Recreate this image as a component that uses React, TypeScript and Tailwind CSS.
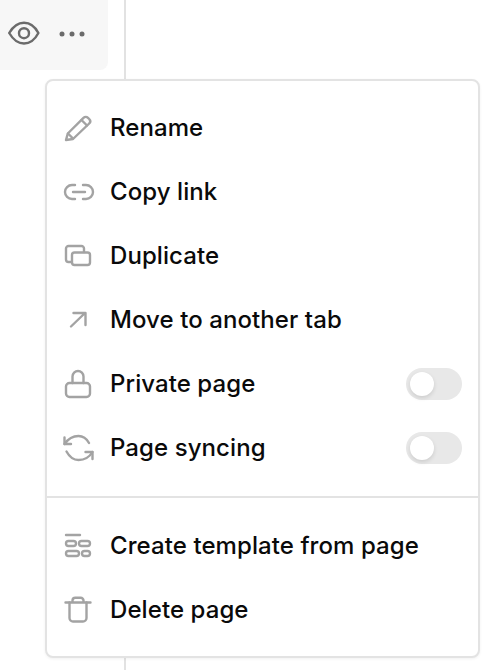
import type { ReactNode } from 'react'

const iconClass = 'block w-[32px] h-[32px] text-[#a3a3a3]'

function Icon({ children }: { children: ReactNode }) {
  return (
    <svg viewBox="0 0 32 32" fill="none" stroke="currentColor" strokeWidth="2.4" strokeLinecap="round" strokeLinejoin="round" className={iconClass}>
      {children}
    </svg>
  )
}

const pencil = (
  <Icon>
    <path d="M3 28l1.800-6.500L20.500 5.800c1.300-1.300 3.200-1.300 4.500 0l1.200 1.200c1.300 1.300 1.300 3.200 0 4.500L10 27z" />
    <path d="M5 21.500l5 5M18.500 8l5.500 5.500" />
  </Icon>
)
const link = (
  <Icon>
    <path d="M12 9H9a7 7 0 0 0 0 14h3M20 9h3a7 7 0 0 1 0 14h-3M10 16h12" />
  </Icon>
)
const duplicate = (
  <Icon>
    <path d="M8 22H5.500A2.500 2.500 0 0 1 3 19.500V8.500A2.500 2.500 0 0 1 5.500 6H18.500A2.500 2.500 0 0 1 21 8.500V12" />
    <rect x="9" y="12.500" width="18" height="12.500" rx="2.500" />
  </Icon>
)
const arrow = (
  <Icon>
    <path d="M8 22.500L22 9M10.500 9H22.500V21" />
  </Icon>
)
const lock = (
  <Icon>
    <rect x="3" y="15" width="24" height="14" rx="3.500" />
    <path d="M9.500 15V8.500a5.500 5.500 0 0 1 11 0V15" />
  </Icon>
)
const sync = (
  <Icon>
    <path d="M1.500 5.500V12H8" />
    <path d="M1.500 12C5 7 10 4 15.500 4c4.500 0 8 2.500 10.500 7" />
    <path d="M22.500 20H29.500V27" />
    <path d="M29.500 20C26.500 25 21 28 15.500 28c-5 0-9-3-12-8.500" />
  </Icon>
)
const template = (
  <Icon>
    <path d="M3 5h14" />
    <rect x="3" y="11" width="10" height="5" rx="2.500" />
    <rect x="16" y="11" width="11" height="5" rx="2.500" />
    <rect x="3" y="21" width="13" height="5" rx="2.500" />
    <rect x="19" y="21" width="8" height="5" rx="2.500" />
  </Icon>
)
const trash = (
  <Icon>
    <path d="M2.500 8.500h25M9.500 8.500V6.500a2.800 2.800 0 0 1 2.800-2.800h5.400a2.800 2.800 0 0 1 2.800 2.800v2" />
    <path d="M6.500 8.500V24a3.500 3.500 0 0 0 3.500 3.500h10a3.500 3.500 0 0 0 3.500-3.500V8.500" />
  </Icon>
)

function Toggle() {
  return (
    <span className="flex items-center w-[56px] h-[32px] rounded-full bg-[#e8e8e8] pl-[4px]">
      <span className="block w-[24px] h-[24px] rounded-full bg-white shadow-[0_2px_4px_rgba(0,0,0,0.12)]" />
    </span>
  )
}

function Row({ icon, label, toggle }: { icon: ReactNode; label: string; toggle?: boolean }) {
  return (
    <div className="flex items-center h-[64px] pl-[16px] pr-[16px]">
      <span className="w-[32px] shrink-0">{icon}</span>
      <span className="ml-[15px] flex-1 text-[24px] font-medium tracking-[0.08px] text-[#0a0a0a] whitespace-nowrap">{label}</span>
      {toggle && <Toggle />}
    </div>
  )
}

export default function App() {
  return (
    <div className="relative w-[488px] h-[670px] overflow-hidden bg-white font-['Inter',sans-serif]">
      <div className="absolute left-[124px] top-0 w-[2px] h-[670px] bg-[#e2e2e2]" />
      <div className="flex items-center gap-[19px] w-[108px] h-[70px] bg-[#f7f7f7] rounded-br-[8px] pl-[8px] pb-[2px]">
        <svg viewBox="0 0 32 32" fill="none" stroke="#6b6b6b" strokeWidth="2.400" className="w-[32px] h-[32px]">
          <path d="M1.200 15C5 8.500 10 4.700 16 4.700S27 8.500 30.400 15C27 21.500 22 25.500 16 25.500S5 21.500 1.200 15z" strokeLinejoin="round" />
          <circle cx="16" cy="15.200" r="5" />
        </svg>
        <svg viewBox="0 0 26 6" fill="#6b6b6b" className="w-[26px] h-[6px]">
          <circle cx="3" cy="3" r="2.500" />
          <circle cx="13" cy="3" r="2.500" />
          <circle cx="23" cy="3" r="2.500" />
        </svg>
      </div>
      <div className="relative ml-[45px] mt-[9px] w-[435px] h-[579px] bg-white border-2 border-[#e3e3e3] rounded-[8px] pt-[15px] pb-[14px] shadow-[0_1px_3px_rgba(0,0,0,0.06)]">
        <Row icon={pencil} label="Rename" />
        <Row icon={link} label="Copy link" />
        <Row icon={duplicate} label="Duplicate" />
        <Row icon={arrow} label="Move to another tab" />
        <Row icon={lock} label="Private page" toggle />
        <Row icon={sync} label="Page syncing" toggle />
        <div className="h-[2px] bg-[#e3e3e3] mt-[16px] mb-[16px]" />
        <Row icon={template} label="Create template from page" />
        <Row icon={trash} label="Delete page" />
      </div>
    </div>
  )
}
